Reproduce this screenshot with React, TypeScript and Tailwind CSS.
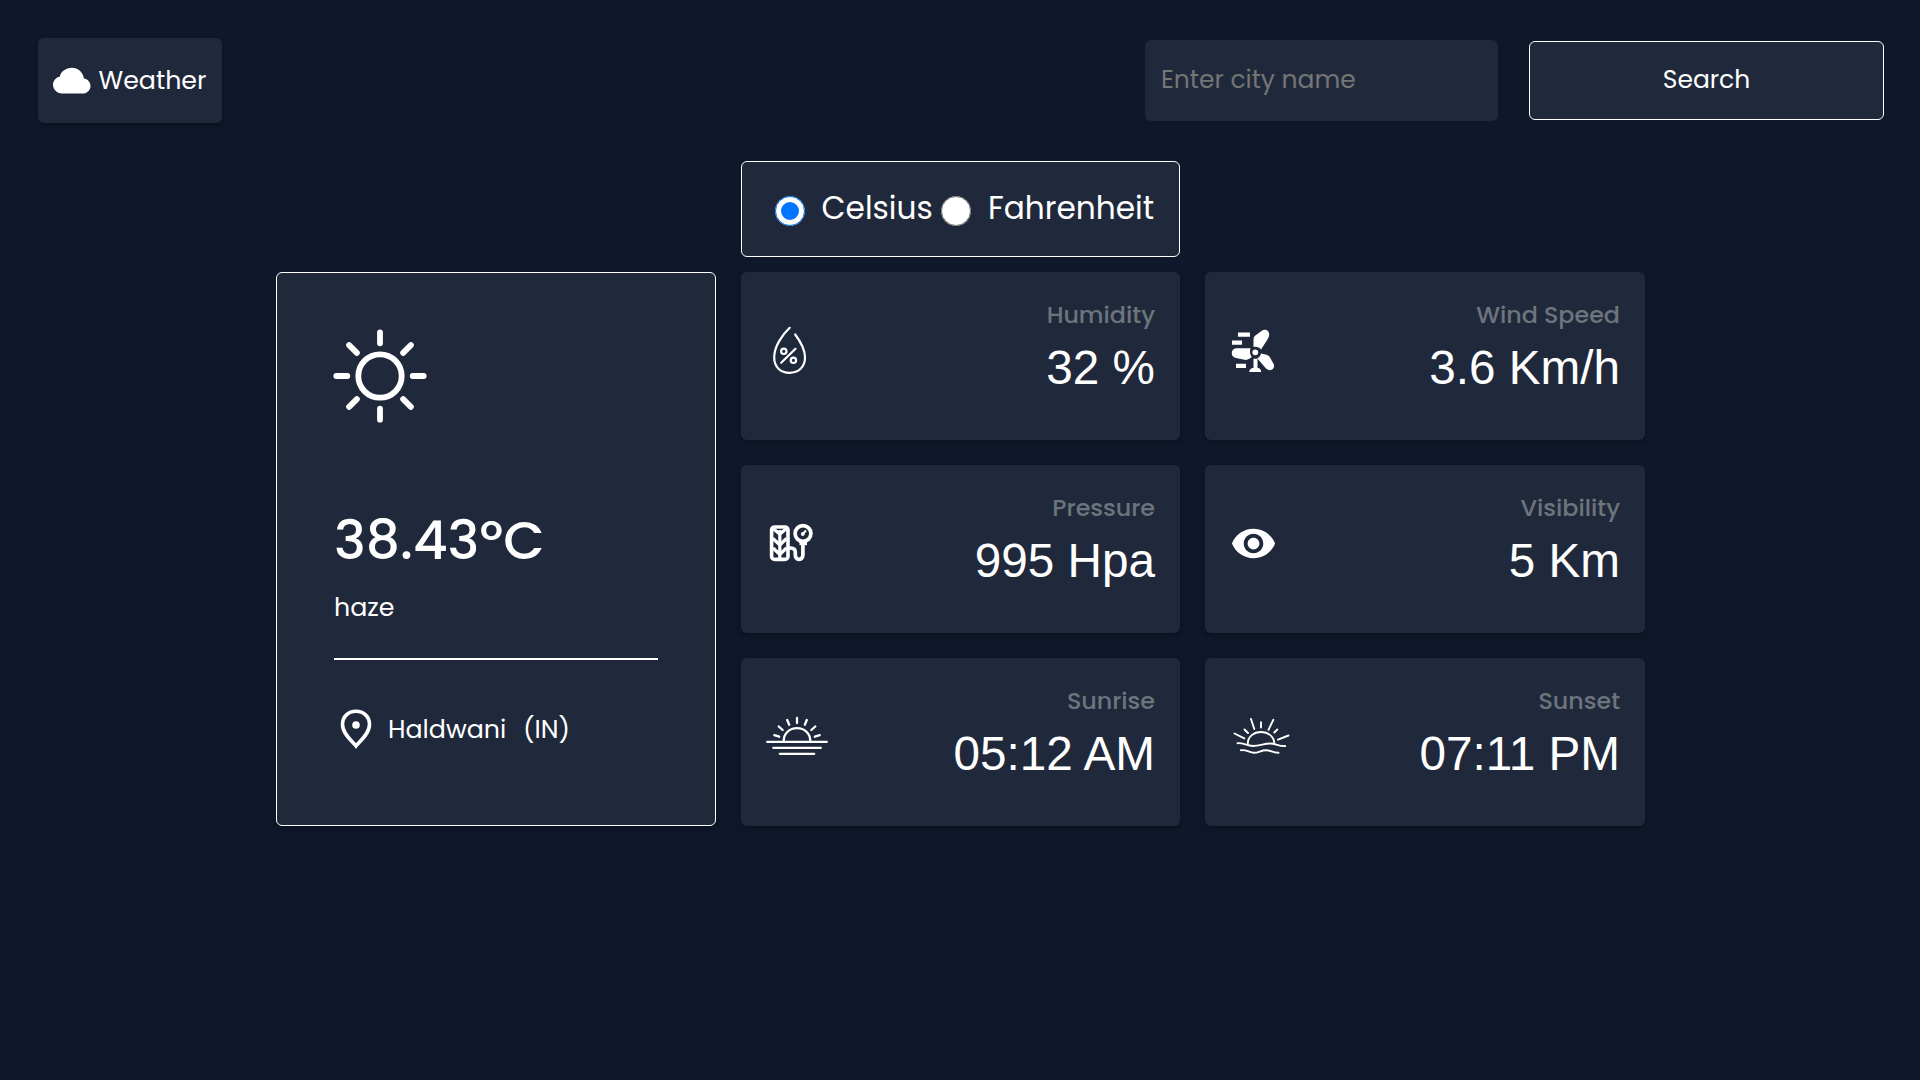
import React from 'react';
import { BsCloudFill } from 'react-icons/bs';
import { MdVisibility } from 'react-icons/md';

function SunIcon() {
  return (
    <svg className="h-24 w-24 shrink-0" viewBox="-48 -48 96 96" fill="none" stroke="currentColor" strokeWidth="5.8" strokeLinecap="round">
      <circle r="21.7" />
      {[0, 45, 90, 135, 180, 225, 270, 315].map((a) => (
        <path key={a} d="M0-32.7V-43.7" transform={`rotate(${a})`} />
      ))}
    </svg>
  );
}

function PinIcon() {
  return (
    <svg className="h-10 w-8 shrink-0" viewBox="0 0 32 40" fill="none">
      <path d="M16 37C12 32 2.5 24.8 2.5 15.2C2.5 7.5 8.5 2.2 16 2.2S29.5 7.5 29.5 15.2C29.5 24.8 20 32 16 37Z" stroke="currentColor" strokeWidth="3.6" />
      <circle cx="16" cy="16" r="3.8" fill="currentColor" />
    </svg>
  );
}

function HumidityIcon() {
  return (
    <svg className="h-[100px] w-[120px]" viewBox="0 0 120 100" fill="none" stroke="currentColor" strokeWidth="2.2" strokeLinecap="round">
      <path d="M49.7 27.8C43 34 34.2 46 34.2 57.5C34.2 67 40.5 72.8 49.5 72.8C58.5 72.8 65 67 65 57.5C65 49.5 60.5 41.5 55.2 34.5" />
      <path d="M41.2 62.7 55.5 48.8" />
      <circle cx="43.8" cy="51.3" r="2.7" />
      <circle cx="53.4" cy="60.3" r="2.7" />
    </svg>
  );
}

function WindIcon() {
  return (
    <svg className="h-[100px] w-[120px]" viewBox="0 0 120 100" fill="currentColor">
      <path d="M38 32.5h12v4.3H38zM32 40.5h10v4.3H32zM36 63.8h10V68H36z" />
      <path d="M53.5 47V39.5C53.5 38 54 36.8 55 35.8L61.5 31C65 28.3 69.5 30.5 69.2 35C69 36.5 68.5 37.8 67.8 39L61 49.5C59.5 47.5 56.5 46.3 53.5 47Z" />
      <path d="M50.5 48.3H37C33.5 48.3 31.8 50.5 31.8 53.2C31.8 55.8 33.2 57.2 36 58L44.5 59.8C46.5 60.2 48 59.5 49.8 58.5L51.8 57C50 54.8 49.4 51.5 50.5 48.3Z" />
      <path d="M61 53.5 66.5 54.8C68 55.2 69.2 56 70 57.5L73.5 63.8C75 66.5 73.5 69.3 71 70C69 70.5 67.3 69.7 65.8 68.3L57.2 58.3C59.3 57.5 60.5 55.7 61 53.5Z" />
      <path d="M53.5 58.8h4V67.8C60 68.3 61.2 69.7 61.2 72H49.2C49.2 69.7 50.8 68.3 53.5 67.8Z" />
      <circle cx="55.3" cy="52.3" r="4.8" className="fill-[#20293b]" />
      <circle cx="55.3" cy="52.3" r="2.9" />
    </svg>
  );
}

function PressureIcon() {
  return (
    <svg className="h-[100px] w-[120px]" viewBox="0 0 120 100" fill="none" stroke="currentColor">
      <rect x="31.6" y="37" width="16.4" height="32.4" rx="3" strokeWidth="3.6" />
      <path d="M39.8 40V68" strokeWidth="3.2" />
      <path d="M33 38.5 39.8 44 46.5 38.5M33 48.5 39.8 55 46.5 48.5M33 58 39.8 64.5 46.5 58" strokeWidth="3.3" />
      <path d="M48 58h2.5C54 58 55.3 59.5 55.3 62.5V64.5C55.3 67.5 56.5 69.3 59 69.3S62.9 67.5 62.9 64.5V54" strokeWidth="3.7" />
      <path d="M59.5 53.2h7.5" strokeWidth="4" />
      <circle cx="63" cy="43.5" r="7.9" strokeWidth="3.7" />
      <circle cx="62.8" cy="44" r="1.9" fill="currentColor" stroke="none" />
      <path d="M62.8 44 65.5 41" strokeWidth="2" strokeLinecap="round" />
    </svg>
  );
}

function EyeIcon() {
  return (
    <div className="h-[100px] w-[120px] pl-[29.5px] pt-[29.5px]">
      <MdVisibility className="size-[47px]" />
    </div>
  );
}

function SunriseIcon() {
  return (
    <svg className="h-[100px] w-[120px]" viewBox="0 0 120 100" fill="none" stroke="currentColor" strokeWidth="2.3" strokeLinecap="round">
      <path d="M27.2 51.8H86.8M33.3 57.8H80.8M39.8 63.8H74.2" />
      <path d="M43.7 51C43.7 43.5 49.5 38.2 57 38.2S70.3 43.5 70.3 51" />
      <path d="M57 28V33M47.2 30 49.2 34.7M66.8 30 64.8 34.7M38.7 36.5 42.7 40M75.3 36.5 71.3 40M34.3 45.2 39.2 46.7M79.7 45.2 74.8 46.7" />
    </svg>
  );
}

function SunsetIcon() {
  return (
    <svg className="h-[100px] w-[120px]" viewBox="0 0 120 100" fill="none" stroke="currentColor" strokeWidth="1.9" strokeLinecap="round">
      <path d="M47.8 53.5C47.8 46.5 54 42 61 42S74.3 46.5 74.3 53.5" />
      <path d="M37.5 53.2C43.5 52.5 46.5 56 53 56C60 56 64 53.5 70 53.5C76 53.5 79 56.5 85.2 56" />
      <path d="M41 60.2C47 59.5 49 62.8 54 62.8C59 62.8 60.5 60.2 66 60.2C71 60.2 72.5 63 78.5 62.8" />
      <path d="M61 32.3V37.5M51 29 54.3 39M73.3 29.8 68.5 39.8M44.5 39.5 48 43M77.3 39.5 74.3 42.5M34.5 43.5 44.3 48.3M88.5 45.5 78 49.7" />
    </svg>
  );
}

const stats = [
  { label: 'Humidity', value: '32 %', Icon: HumidityIcon, offset: '-ml-px pt-7' },
  { label: 'Wind Speed', value: '3.6 Km/h', Icon: WindIcon, offset: '-ml-[5px] pt-7' },
  { label: 'Pressure', value: '995 Hpa', Icon: PressureIcon, offset: '-ml-px pt-[25px]' },
  { label: 'Visibility', value: '5 Km', Icon: EyeIcon, offset: '-ml-[5px] pt-[25px]' },
  { label: 'Sunrise', value: '05:12 AM', Icon: SunriseIcon, offset: '-ml-px pt-8' },
  { label: 'Sunset', value: '07:11 PM', Icon: SunsetIcon, offset: '-ml-[5px] pt-8' },
];

export default function App() {
  return (
    <div className="h-[1080px] w-[1920px] overflow-hidden bg-[#0f172a] font-['Poppins','Inter',sans-serif] text-white">
      <header className="flex h-[161px] items-start justify-between pl-[38px] pr-9 pt-[38px]">
        <div className="flex h-[85px] w-[184px] items-center rounded-md bg-[#20293b] pl-[15px] shadow-[0_2px_4px_rgba(0,0,0,0.3)]">
          <BsCloudFill className="mt-0.5 size-[37.5px]" />
          <span className="-mt-0.5 ml-2 text-[25.3px] leading-[38px]">Weather</span>
        </div>
        <div className="flex items-center gap-[31px] pt-0.5">
          <input
            className="h-[81px] w-[353px] rounded-md bg-[#20293b] px-4 pb-0.5 text-[25px] outline-none placeholder:text-[#757575]"
            placeholder="Enter city name"
          />
          <button className="h-[79px] w-[355px] rounded-md border border-white bg-[#20293b] pb-0.5 text-[25px]">Search</button>
        </div>
      </header>

      <main className="ml-[276px] grid w-[1369px] grid-cols-[440px_439px_440px] gap-x-[25px]">
        <div className="col-start-2 mb-[15px] flex h-24 items-center rounded-md border border-white bg-[#20293b] pl-[33px]">
          <input type="radio" name="unit" defaultChecked className="mt-1 size-[30px] shrink-0" />
          <label className="-mt-0.5 ml-[16.5px] w-[119.5px] shrink-0 text-[31.2px] leading-10">Celsius</label>
          <input type="radio" name="unit" className="mt-1 size-[30px] shrink-0" />
          <label className="-mt-0.5 ml-[17px] whitespace-nowrap text-[31.2px] leading-10">Fahrenheit</label>
        </div>

        <section className="col-start-1 row-start-2 h-[554px] rounded-md border border-white bg-[#20293b] px-[57px] pt-[55px] shadow-[0_2px_4px_rgba(0,0,0,0.3)]">
          <div className="-ml-0.5">
            <SunIcon />
          </div>
          <div className="mt-[85px] whitespace-nowrap text-[53.6px] font-medium leading-[64px]">38.43ºC</div>
          <div className="mt-[15px] text-[25.3px] leading-[38px]">haze</div>
          <div className="mt-8 h-0.5 w-[324px] bg-white" />
          <div className="mt-[49px] flex items-center">
            <div className="ml-1.5">
              <PinIcon />
            </div>
            <span className="ml-4 w-[135px] text-[25.3px] leading-[38px]">Haldwani</span>
            <span className="text-[25.3px] leading-[38px]">(IN)</span>
          </div>
        </section>

        <section className="col-span-2 row-start-2 grid grid-cols-[439px_440px] gap-[25px]">
          {stats.map(({ label, value, Icon, offset }) => (
            <article key={label} className="flex h-[168px] justify-between rounded-md bg-[#20293b] pr-[25px] shadow-[0_2px_4px_rgba(0,0,0,0.3)]">
              <div className={offset}>
                <Icon />
              </div>
              <div className="whitespace-nowrap pt-6 text-right">
                <div className="text-[23.8px] font-medium leading-[38px] text-[#6c757d]">{label}</div>
                <div className="mt-[5px] font-['Liberation_Sans',Arial,sans-serif] text-[47.7px] leading-[58px]">{value}</div>
              </div>
            </article>
          ))}
        </section>
      </main>
    </div>
  );
}
